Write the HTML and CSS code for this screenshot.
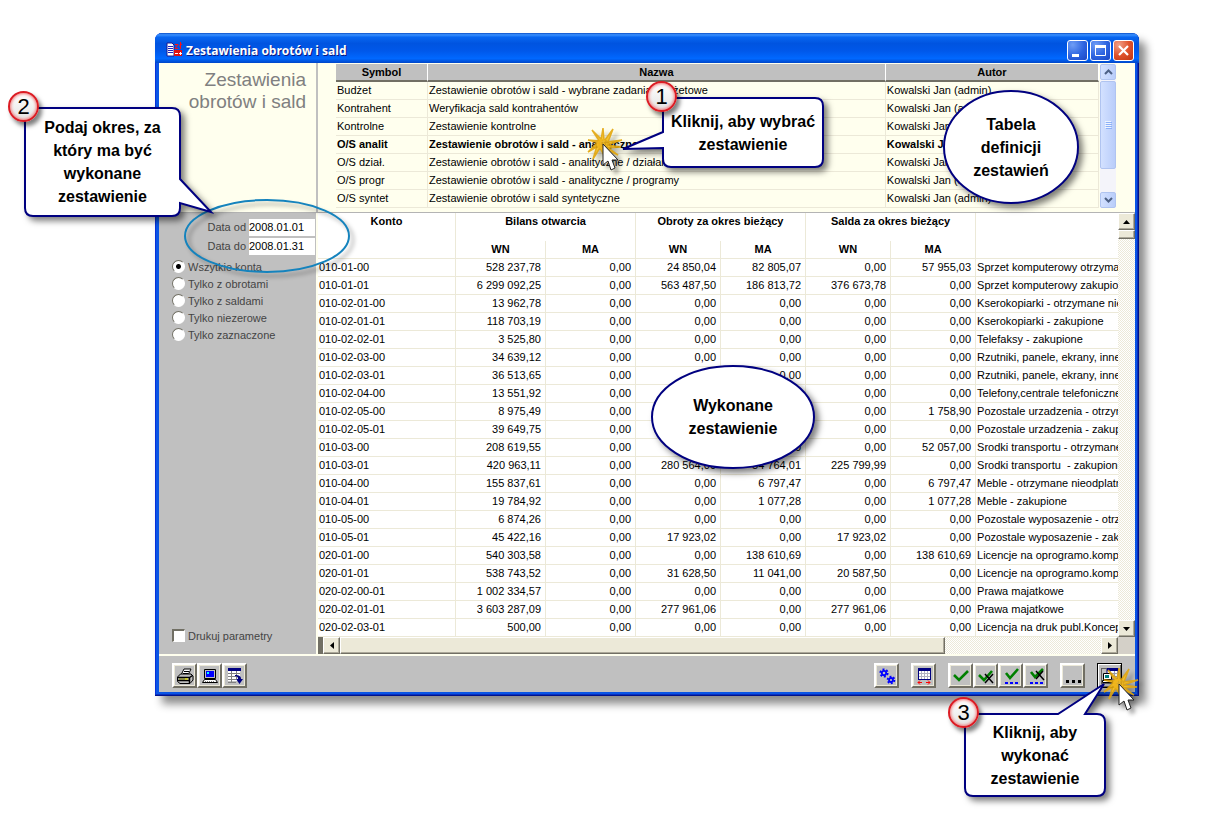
FILE: index.html
```html
<!DOCTYPE html>
<html lang="pl">

<head>
    <meta charset="UTF-8">
    <meta name="viewport" content="width=device-width, initial-scale=1.0">
    <title>Zestawienia obrotów i sald</title>
    <link rel="stylesheet" href="styles.css">
</head>

<body>
    <div class="window">
        <!-- Title Bar -->
        <header class="title-bar">
            <svg class="title-icon" width="16" height="16" viewBox="0 0 16 16">
                <path d="M1 1h5l2 2v11H1z" fill="#fff" stroke="#1a1a90" />
                <path d="M2 4.500h5M2 6.500h5M2 8.500h5M2 10.500h5" stroke="#2222c0" />
                <path d="M9 2.500h3l-3 4h3M14.500 0v7M13 4l3-2" stroke="#ff1010" fill="none" />
                <path d="M8 8h8v6H8z" fill="#e01010" />
                <path d="M9 11.500h3M13 11.500h3M14.500 10v3" stroke="#fff" />
            </svg>
            <span class="title-text">Zestawienia obrotów i sald</span>
            <button class="win-btn" aria-label="Minimalizuj">
                <svg width="19" height="19" viewBox="0 0 19 19"><path d="M4 13h7v3H4z" fill="#fff" /></svg>
            </button>
            <button class="win-btn" aria-label="Maksymalizuj">
                <svg width="19" height="19" viewBox="0 0 19 19"><path d="M4.500 4.500h10v10h-10z" fill="none" stroke="#fff" /><path d="M4 4h11v3H4z" fill="#fff" /></svg>
            </button>
            <button class="win-btn close" aria-label="Zamknij">
                <svg width="19" height="19" viewBox="0 0 19 19"><path d="M5 5l9 9M14 5l-9 9" stroke="#fff" stroke-width="2.200" /></svg>
            </button>
        </header>

        <!-- Report Definitions -->
        <section class="definitions">
            <h1 class="heading">Zestawienia<br>obrotów i sald</h1>
            <div class="def-list">
                <table class="def-table">
                    <colgroup><col class="col-symbol"><col class="col-name"><col class="col-author"></colgroup>
                    <thead>
                        <tr><th>Symbol</th><th>Nazwa</th><th>Autor</th></tr>
                    </thead>
                    <tbody>
                        <tr><td>Budżet</td><td>Zestawienie obrotów i sald - wybrane zadania budżetowe</td><td>Kowalski Jan (admin)</td></tr>
                        <tr><td>Kontrahent</td><td>Weryfikacja sald kontrahentów</td><td>Kowalski Jan (admin)</td></tr>
                        <tr><td>Kontrolne</td><td>Zestawienie kontrolne</td><td>Kowalski Jan (admin)</td></tr>
                        <tr class="selected"><td>O/S analit</td><td>Zestawienie obrotów i sald - analityczne</td><td>Kowalski Jan (admin)</td></tr>
                        <tr><td>O/S dział.</td><td>Zestawienie obrotów i sald - analityczne / działania</td><td>Kowalski Jan (admin)</td></tr>
                        <tr><td>O/S progr</td><td>Zestawienie obrotów i sald - analityczne / programy</td><td>Kowalski Jan (admin)</td></tr>
                        <tr><td>O/S syntet</td><td>Zestawienie obrotów i sald syntetyczne</td><td>Kowalski Jan (admin)</td></tr>
                    </tbody>
                </table>
                <div class="xp-scroll">
                    <button class="xp-part" aria-label="W górę"><svg width="9" height="6" viewBox="0 0 9 6"><path d="M1 5l3.500-3.500L8 5" fill="none" stroke="#4d6185" stroke-width="2" /></svg></button>
                    <div class="xp-part xp-thumb"><svg width="7" height="8" viewBox="0 0 7 8"><path d="M0 .5h6M0 2.500h6M0 4.500h6M0 6.500h6" stroke="#eef4fe" /><path d="M1 1.500h6M1 3.500h6M1 5.500h6M1 7.500h6" stroke="#8cb0f8" /></svg></div>
                    <button class="xp-part xp-down" aria-label="W dół"><svg width="9" height="6" viewBox="0 0 9 6"><path d="M1 1l3.500 3.500L8 1" fill="none" stroke="#4d6185" stroke-width="2" /></svg></button>
                </div>
            </div>
        </section>

        <!-- Parameters and Report -->
        <section class="report">
            <form class="params">
                <div class="dates">
                    <label for="date-from">Data od</label>
                    <input class="date" type="text" id="date-from" value="2008.01.01">
                    <label for="date-to">Data do</label>
                    <input class="date" type="text" id="date-to" value="2008.01.31">
                </div>
                <label class="option"><input type="radio" name="scope" checked>Wszytkie konta</label>
                <label class="option"><input type="radio" name="scope">Tylko z obrotami</label>
                <label class="option"><input type="radio" name="scope">Tylko z saldami</label>
                <label class="option"><input type="radio" name="scope">Tylko niezerowe</label>
                <label class="option"><input type="radio" name="scope">Tylko zaznaczone</label>
                <label class="option print-params"><input type="checkbox">Drukuj parametry</label>
            </form>

            <div class="grid">
                <div class="grid-body">
                    <div class="accounts-wrap">
                        <table class="accounts">
                            <colgroup>
                                <col class="col-account">
                                <col class="col-opening"><col class="col-opening">
                                <col class="col-amount"><col class="col-amount"><col class="col-amount"><col class="col-amount">
                                <col>
                            </colgroup>
                            <thead>
                                <tr><th rowspan="2">Konto</th><th colspan="2" class="group">Bilans otwarcia</th><th colspan="2" class="group">Obroty za okres bieżący</th><th colspan="2" class="group">Salda za okres bieżący</th><th rowspan="2"></th></tr>
                                <tr class="sub"><th>WN</th><th>MA</th><th>WN</th><th>MA</th><th>WN</th><th>MA</th></tr>
                            </thead>
                            <tbody>
                                <tr><td>010-01-00</td><td>528 237,78</td><td>0,00</td><td>24 850,04</td><td>82 805,07</td><td>0,00</td><td>57 955,03</td><td>Sprzet komputerowy otrzymany</td></tr>
                                <tr><td>010-01-01</td><td>6 299 092,25</td><td>0,00</td><td>563 487,50</td><td>186 813,72</td><td>376 673,78</td><td>0,00</td><td>Sprzet komputerowy zakupiony</td></tr>
                                <tr><td>010-02-01-00</td><td>13 962,78</td><td>0,00</td><td>0,00</td><td>0,00</td><td>0,00</td><td>0,00</td><td>Kserokopiarki - otrzymane nieodplatnie</td></tr>
                                <tr><td>010-02-01-01</td><td>118 703,19</td><td>0,00</td><td>0,00</td><td>0,00</td><td>0,00</td><td>0,00</td><td>Kserokopiarki - zakupione</td></tr>
                                <tr><td>010-02-02-01</td><td>3 525,80</td><td>0,00</td><td>0,00</td><td>0,00</td><td>0,00</td><td>0,00</td><td>Telefaksy - zakupione</td></tr>
                                <tr><td>010-02-03-00</td><td>34 639,12</td><td>0,00</td><td>0,00</td><td>0,00</td><td>0,00</td><td>0,00</td><td>Rzutniki, panele, ekrany, inne</td></tr>
                                <tr><td>010-02-03-01</td><td>36 513,65</td><td>0,00</td><td>0,00</td><td>0,00</td><td>0,00</td><td>0,00</td><td>Rzutniki, panele, ekrany, inne</td></tr>
                                <tr><td>010-02-04-00</td><td>13 551,92</td><td>0,00</td><td>0,00</td><td>0,00</td><td>0,00</td><td>0,00</td><td>Telefony,centrale telefoniczne</td></tr>
                                <tr><td>010-02-05-00</td><td>8 975,49</td><td>0,00</td><td>0,00</td><td>1 758,90</td><td>0,00</td><td>1 758,90</td><td>Pozostale urzadzenia - otrzymane</td></tr>
                                <tr><td>010-02-05-01</td><td>39 649,75</td><td>0,00</td><td>0,00</td><td>0,00</td><td>0,00</td><td>0,00</td><td>Pozostale urzadzenia - zakupione</td></tr>
                                <tr><td>010-03-00</td><td>208 619,55</td><td>0,00</td><td>0,00</td><td>52 057,00</td><td>0,00</td><td>52 057,00</td><td>Srodki transportu - otrzymane</td></tr>
                                <tr><td>010-03-01</td><td>420 963,11</td><td>0,00</td><td>280 564,00</td><td>54 764,01</td><td>225 799,99</td><td>0,00</td><td>Srodki transportu&nbsp; - zakupione</td></tr>
                                <tr><td>010-04-00</td><td>155 837,61</td><td>0,00</td><td>0,00</td><td>6 797,47</td><td>0,00</td><td>6 797,47</td><td>Meble - otrzymane nieodplatnie</td></tr>
                                <tr><td>010-04-01</td><td>19 784,92</td><td>0,00</td><td>0,00</td><td>1 077,28</td><td>0,00</td><td>1 077,28</td><td>Meble - zakupione</td></tr>
                                <tr><td>010-05-00</td><td>6 874,26</td><td>0,00</td><td>0,00</td><td>0,00</td><td>0,00</td><td>0,00</td><td>Pozostale wyposazenie - otrzymane</td></tr>
                                <tr><td>010-05-01</td><td>45 422,16</td><td>0,00</td><td>17 923,02</td><td>0,00</td><td>17 923,02</td><td>0,00</td><td>Pozostale wyposazenie - zakupione</td></tr>
                                <tr><td>020-01-00</td><td>540 303,58</td><td>0,00</td><td>0,00</td><td>138 610,69</td><td>0,00</td><td>138 610,69</td><td>Licencje na oprogramo.komputerowe</td></tr>
                                <tr><td>020-01-01</td><td>538 743,52</td><td>0,00</td><td>31 628,50</td><td>11 041,00</td><td>20 587,50</td><td>0,00</td><td>Licencje na oprogramo.komputerowe</td></tr>
                                <tr><td>020-02-00-01</td><td>1 002 334,57</td><td>0,00</td><td>0,00</td><td>0,00</td><td>0,00</td><td>0,00</td><td>Prawa majatkowe</td></tr>
                                <tr><td>020-02-01-01</td><td>3 603 287,09</td><td>0,00</td><td>277 961,06</td><td>0,00</td><td>277 961,06</td><td>0,00</td><td>Prawa majatkowe</td></tr>
                                <tr><td>020-02-03-01</td><td>500,00</td><td>0,00</td><td>0,00</td><td>0,00</td><td>0,00</td><td>0,00</td><td>Licencja na druk publ.Koncepcja</td></tr>
                            </tbody>
                        </table>
                    </div>
                    <div class="scroll vertical">
                        <button class="scroll-btn" aria-label="W górę"><svg width="7" height="4" viewBox="0 0 7 4"><path d="M0 4h7L3.500 0z" /></svg></button>
                        <div class="scroll-thumb"></div>
                        <button class="scroll-btn scroll-end" aria-label="W dół"><svg width="7" height="4" viewBox="0 0 7 4"><path d="M0 0h7L3.500 4z" /></svg></button>
                    </div>
                </div>
                <div class="scroll horizontal">
                    <div class="splitter"></div>
                    <button class="scroll-btn" aria-label="W lewo"><svg width="4" height="7" viewBox="0 0 4 7"><path d="M4 0v7L0 3.500z" /></svg></button>
                    <div class="scroll-thumb"></div>
                    <button class="scroll-btn scroll-end" aria-label="W prawo"><svg width="4" height="7" viewBox="0 0 4 7"><path d="M0 0v7l4-3.500z" /></svg></button>
                    <div class="corner"></div>
                </div>
            </div>
        </section>

        <!-- Toolbar -->
        <footer class="toolbar">
            <div class="tool-group">
                <button class="tool" aria-label="Drukuj">
                    <svg width="18" height="18" viewBox="0 0 18 18">
                        <path d="M5 8l3-6h7l-3 6z" fill="#fff" stroke="#000" />
                        <path d="M8 4.500h5M7 6.500h5" stroke="#000" />
                        <path d="M1.500 10l3-3h10.500l2 2v4l-3 3.500h-10l-2.500-2z" fill="#c0c0c0" stroke="#000" />
                        <path d="M2 10.500h11.500l3-2M2 13.500h12M13.500 10v6" stroke="#000" stroke-width="1.500" fill="none" />
                        <path d="M3 12h8" stroke="#808000" /><path d="M9 12h3" stroke="#ff0" />
                    </svg>
                </button>
                <button class="tool" aria-label="Ekran">
                    <svg width="18" height="18" viewBox="0 0 18 18">
                        <path d="M3.500 2.500h11v9h-11z" fill="#c0c0c0" stroke="#000" />
                        <path d="M5 4h8v6H5z" fill="#00f" /><path d="M6 5h2v2H6z" fill="#0ff" />
                        <path d="M3.500 12.500h11l2 3h-15z" fill="#fff" stroke="#000" />
                        <path d="M4 14.500h10" stroke="#808080" stroke-dasharray="1 1" />
                    </svg>
                </button>
                <button class="tool" aria-label="Eksport">
                    <svg width="18" height="18" viewBox="0 0 18 18">
                        <path d="M2 2h12v12H2z" fill="#fff" /><path d="M2 1h13v3H2z" fill="#000080" />
                        <path d="M2 6.500h12M2 9.500h10M2 12.500h8M2 15.500h8M5.500 4v12M10.500 4v8" stroke="#808080" />
                        <path d="M9 8c4 0 6 1 6 4h2l-3.500 5L10 12h2c0-2-1-3-3-3z" fill="#000080" />
                    </svg>
                </button>
            </div>
            <div class="tool-group push">
                <button class="tool" aria-label="Ustawienia">
                    <svg width="18" height="18" viewBox="0 0 18 18" fill="none" stroke="#00f">
                        <circle cx="6" cy="6" r="2.200" stroke-width="1.800" /><circle cx="6" cy="6" r="3.700" stroke-width="1.800" stroke-dasharray="2 1.870" />
                        <circle cx="13" cy="13" r="2" stroke-width="1.800" /><circle cx="13" cy="13" r="3.400" stroke-width="1.800" stroke-dasharray="1.800 1.760" />
                    </svg>
                </button>
            </div>
            <div class="tool-group">
                <button class="tool" aria-label="Szerokość kolumn">
                    <svg width="18" height="18" viewBox="0 0 18 18">
                        <path d="M3 1h13v12H3z" fill="#fff" /><path d="M3 1h13v3H3z" fill="#000080" />
                        <path d="M3 6.500h13M3 9.500h13M6.500 4v8M9.500 4v8M12.500 4v8" stroke="#b0b0c0" />
                        <path d="M3.500 1v12M15.500 1v12M3 12.500h13" stroke="#000080" fill="none" />
                        <path d="M3 15.500h4M5 13.500l-2 2 2 2M11 15.500h4M13 13.500l2 2-2 2" stroke="#f00" fill="none" />
                    </svg>
                </button>
            </div>
            <div class="tool-group">
                <button class="tool" aria-label="Zaznacz">
                    <svg width="18" height="18" viewBox="0 0 18 18"><path d="M2 8l5 5 9-9" fill="none" stroke="#008000" stroke-width="2.600" /></svg>
                </button>
                <button class="tool" aria-label="Odznacz">
                    <svg width="18" height="18" viewBox="0 0 18 18"><path d="M2 8l5 5 8-9" fill="none" stroke="#008000" stroke-width="2.600" /><path d="M8 7l8 9M16 7l-8 9" stroke="#000" stroke-width="1.500" /></svg>
                </button>
                <button class="tool" aria-label="Zaznacz wszystkie">
                    <svg width="18" height="18" viewBox="0 0 18 18"><path d="M4 6l4 5 8-9" fill="none" stroke="#008000" stroke-width="2.600" /><path d="M3 16h14" stroke="#00f" stroke-width="2" stroke-dasharray="3 2" /></svg>
                </button>
                <button class="tool" aria-label="Odznacz wszystkie">
                    <svg width="18" height="18" viewBox="0 0 18 18"><path d="M4 5l4 5 8-8" fill="none" stroke="#008000" stroke-width="2.600" /><path d="M9 4l8 9M16 4l-7 8" stroke="#000" stroke-width="1.500" /><path d="M3 16h14" stroke="#00f" stroke-width="2" stroke-dasharray="3 2" /></svg>
                </button>
            </div>
            <div class="tool-group">
                <button class="tool" aria-label="Więcej">
                    <svg width="18" height="18" viewBox="0 0 18 18"><path d="M2 13h3v3H2zM8 13h3v3H8zM14 13h3v3h-3z" /></svg>
                </button>
            </div>
            <div class="tool-group">
                <button class="tool current" aria-label="Wykonaj zestawienie">
                    <svg width="18" height="18" viewBox="0 0 18 18">
                        <path d="M.5 1.500h17v15H.5z" fill="none" stroke="#000" stroke-dasharray="1 1" />
                        <path d="M6 2h11v10H6z" fill="#fff" stroke="#000080" /><path d="M6 1h11v3H6z" fill="#000080" />
                        <path d="M6 6.500h11M6 9.500h11M9.500 4v8M13.500 4v8" stroke="#a0a0b0" />
                        <path d="M2.500 6.500h8v6h-8z" fill="#fff" stroke="#000" /><path d="M4 8h4v3H4z" fill="#008080" />
                        <path d="M1.500 13.500h10v2h-10z" fill="#fff" stroke="#000" />
                    </svg>
                </button>
            </div>
        </footer>

        <!-- Annotations -->
        <svg class="mark dates-mark" width="166" height="74" viewBox="0 0 166 74">
            <ellipse cx="83" cy="37" rx="82" ry="36" fill="none" stroke="#1583bd" stroke-width="2" />
        </svg>

        <div class="callout callout-choose">
            <svg class="shape" width="162" height="71" viewBox="0 0 162 71"><path d="M8 1h145q8 0 8 8v53q0 8-8 8H9q-8 0-8-8V51L-39 52 1 35V9q0-8 8-8z" /></svg>
            <span class="badge">1</span>
            <p>Kliknij, aby wybrać<br>zestawienie</p>
        </div>
        <div class="callout callout-period">
            <svg class="shape" width="157" height="110" viewBox="0 0 157 110"><path d="M9 1h139q8 0 8 8v63l31 33-31-9v5q0 8-8 8H9q-8 0-8-8V9q0-8 8-8z" /></svg>
            <span class="badge">2</span>
            <p>Podaj okres, za<br>który ma być<br>wykonane<br>zestawienie</p>
        </div>
        <div class="callout callout-run">
            <svg class="shape" width="142" height="84" viewBox="0 0 142 84"><path d="M9 1h85l46-30-19 30h12q8 0 8 8v66q0 8-8 8H9q-8 0-8-8V9q0-8 8-8z" /></svg>
            <span class="badge">3</span>
            <p>Kliknij, aby<br>wykonać<br>zestawienie</p>
        </div>
        <div class="callout callout-definitions">
            <svg class="shape" width="138" height="114" viewBox="0 0 138 114"><ellipse cx="69" cy="57" rx="67" ry="56" /></svg>
            <p>Tabela<br>definicji<br>zestawień</p>
        </div>
        <div class="callout callout-result">
            <svg class="shape" width="164" height="104" viewBox="0 0 164 104"><ellipse cx="82" cy="52" rx="81" ry="51" /></svg>
            <p>Wykonane<br>zestawienie</p>
        </div>

        <svg class="mark burst-row" width="40" height="50" viewBox="0 0 40 50">
            <use href="#burst-shape" />
        </svg>
        <svg class="mark burst-run" width="40" height="50" viewBox="0 0 40 50">
            <g id="burst-shape">
                <path d="M18 12L8 2l8 12zM20 12L19 0l-2 12zM21 12l8-11-5 13zM23 14l15-2-15 5zM23 17l14 2-14 1zM22 18l12 9-14-7zM19 19l2 10-5-9zM17 18L9 31l4-13zM16 17L4 24l9-9zM16 15L4 12l12 1z" fill="#fbc421" stroke="#e3a60c" stroke-width="1.500" opacity="0.9" />
                <circle cx="18" cy="16" r="5" fill="#f3b81c" opacity="0.85" />
                <path d="M19 16v21l5-4 3 9 4-2-3-8h6z" fill="#fff" stroke="#222" stroke-linejoin="round" />
            </g>
        </svg>
    </div>
</body>

</html>
```

FILE: styles.css
```css
/* General Styles */
* {
    box-sizing: border-box;
}

body {
    min-height: 100vh;
    margin: 0;
    padding: 33px 89px 0 155px;
    background-color: #fff;
    font-family: "Liberation Sans", Arial, sans-serif;
    font-size: 11px;
    color: #000;
}

button {
    display: flex;
    align-items: center;
    justify-content: center;
    margin: 0;
    padding: 0;
    border: none;
}

table {
    width: 100%;
    table-layout: fixed;
    border-spacing: 0;
}

th,
td {
    height: 18px;
    padding: 0 1px;
    line-height: 17px;
    border-right: 1px solid #ece9d8;
    border-bottom: 1px solid #ece9d8;
    text-align: left;
    white-space: nowrap;
    overflow: hidden;
}

th {
    text-align: center;
}

/* Window */
.window {
    position: relative;
    padding: 0 4px 4px;
    background-color: #0a55e5;
    border-radius: 7px 7px 0 0;
    box-shadow: inset -1px -1px #00138c, inset -2px -2px #0730c0, inset 1px 0 #0831d9, 7px 8px 9px rgba(0, 0, 0, 0.45);
}

.title-bar {
    display: flex;
    align-items: center;
    gap: 2px;
    height: 30px;
    margin: 0 -4px;
    padding: 4px 5px 0 11px;
    border-radius: 7px 7px 0 0;
    background: linear-gradient(#0a4fc8 0, #3a90ff 6%, #0866f0 14%, #0054e0 35%, #0058ea 60%, #0068ff 85%, #0046c8 100%);
}

.title-text {
    flex: 1;
    padding-left: 2px;
    font-family: "Open Sans", sans-serif;
    font-size: 12px;
    font-weight: bold;
    color: #fff;
    text-shadow: 1px 1px #0a1883;
}

.win-btn {
    width: 21px;
    height: 21px;
    border: 1px solid #fff;
    border-radius: 3px;
    background: radial-gradient(circle at 25% 20%, #6f9df5, #2c63e0 55%, #1c47c4);
}

.win-btn.close {
    background: radial-gradient(circle at 25% 20%, #f0a088, #e0532c 50%, #c03410);
}

/* Report Definitions */
.definitions {
    display: flex;
    background-color: #ffffee;
    border-bottom: 1px solid #b4b4b4;
}

.heading {
    width: 159px;
    margin: 0;
    padding: 6px 10px 0 0;
    border-right: 2px solid #c0c0c0;
    font-size: 19px;
    font-weight: normal;
    line-height: 22px;
    text-align: right;
    color: #808080;
}

.def-list {
    flex: 1;
    display: flex;
    gap: 1px;
    min-width: 0;
    padding: 1px 19px 4px 18px;
}

.col-symbol {
    width: 92px;
}

.col-name {
    width: 60%;
}

.def-table th {
    background-color: #c0c0c0;
    border-right-color: #fff;
    border-bottom: 2px solid #716f64;
    line-height: 14px;
}

.selected {
    font-weight: bold;
}

.xp-scroll {
    display: flex;
    flex-direction: column;
    width: 16px;
    gap: 1px;
    background-color: #f4f4fa;
}

.xp-part {
    width: 16px;
    height: 16px;
    border: 1px solid #b0c4f0;
    border-radius: 2px;
    background: linear-gradient(90deg, #d3e1ff, #b9cdfa);
}

.xp-thumb {
    display: flex;
    align-items: center;
    justify-content: center;
    height: 88px;
}

.xp-down,
.scroll-end {
    margin-top: auto;
}

/* Parameters */
.report {
    display: flex;
    border-bottom: 2px solid #ffffee;
}

.params {
    display: flex;
    flex-direction: column;
    width: 159px;
    padding: 6px 1px 10px 13px;
    background-color: #c0c0c0;
    border-right: 2px solid #ffffee;
    color: #444;
}

.dates {
    display: grid;
    grid-template-columns: 1fr 66px;
    gap: 2px 3px;
    margin-bottom: 3px;
    line-height: 17px;
    text-align: right;
}

.date {
    width: 100%;
    height: 17px;
    padding: 0;
    border: none;
    background-color: #fff;
    font: inherit;
    color: #000;
}

.option {
    display: flex;
    align-items: center;
    gap: 3px;
    height: 17px;
}

.option input {
    appearance: none;
    width: 13px;
    height: 13px;
    margin: 0;
    border: 1px solid;
    border-color: #716f64 #fff #fff #716f64;
    background-color: #fff;
}

.option input[type="radio"] {
    border-radius: 50%;
}

.option input[type="radio"]:checked {
    background-image: radial-gradient(circle, #000 2px, transparent 3px);
}

.print-params {
    margin-top: auto;
}

.print-params input {
    border-width: 2px 1px 1px 2px;
}

/* Report Grid */
.grid {
    flex: 1;
    min-width: 0;
    background-color: #fff;
}

.grid-body {
    display: flex;
}

.accounts-wrap {
    flex: 1;
    min-width: 0;
    overflow: hidden;
}

.col-account {
    width: 138px;
}

.col-opening {
    width: 90px;
}

.col-amount {
    width: 85px;
}

.accounts th {
    height: 28px;
    vertical-align: top;
}

.accounts .group {
    border-bottom: none;
}

.accounts .sub th {
    height: 18px;
}

.accounts td {
    padding-right: 4px;
    text-align: right;
}

.accounts td:first-child,
.accounts td:last-child {
    padding-right: 0;
    text-align: left;
}

.accounts tr > :last-child {
    border-right: none;
}

.accounts .sub > :last-child {
    border-right: 1px solid #ece9d8;
}

/* Classic Scrollbars */
.scroll {
    display: flex;
    background: repeating-conic-gradient(#ece9d8 0 25%, #fff 0 50%) 0 0 / 2px 2px;
}

.vertical {
    flex-direction: column;
    width: 17px;
}

.horizontal {
    height: 17px;
}

.scroll-btn,
.scroll-thumb {
    flex-shrink: 0;
    width: 17px;
    height: 17px;
    background-color: #ece9d8;
    border: 1px solid;
    border-color: #fff #716f64 #716f64 #fff;
    box-shadow: inset -1px -1px #aca899;
}

.vertical .scroll-thumb {
    height: 9px;
}

.horizontal .scroll-thumb {
    width: 74%;
}

.horizontal .scroll-end {
    margin-left: auto;
}

.splitter {
    width: 5px;
    background-color: #716f64;
}

.corner {
    width: 17px;
    background-color: #d4d0c8;
}

/* Toolbar */
.toolbar {
    display: flex;
    gap: 12px;
    padding: 7px 13px 4px;
    background-color: #c0c0c0;
}

.tool-group {
    display: flex;
}

.push {
    margin-left: auto;
}

.tool {
    width: 25px;
    height: 25px;
    background-color: #c0c0c0;
    border: 2px solid;
    border-color: #fff #716f64 #716f64 #fff;
    box-shadow: inset 1px 1px #ece9d8, inset -1px -1px #ece9d8;
}

.tool.current {
    border: 1px solid #000;
    box-shadow: inset 1px 1px #fff, inset -1px -1px #716f64;
}

/* Annotations */
.mark,
.callout {
    position: absolute;
}

.mark {
    overflow: visible;
    pointer-events: none;
    filter: drop-shadow(4px 4px 2px rgba(0, 0, 0, 0.35));
}

.dates-mark {
    left: 29px;
    top: 166px;
}

.burst-row {
    left: 429px;
    top: 95px;
}

.burst-run {
    right: -1px;
    top: 635px;
}

.callout {
    display: flex;
    align-items: center;
    justify-content: center;
}

.callout p {
    position: relative;
    margin: 0;
    font-size: 16px;
    font-weight: bold;
    line-height: 23px;
    text-align: center;
    white-space: nowrap;
}

.shape {
    position: absolute;
    left: 0;
    top: 0;
    overflow: visible;
    fill: #fff;
    stroke: #000080;
    stroke-width: 2px;
    filter: drop-shadow(4px 4px 3px rgba(0, 0, 0, 0.5));
}

.badge {
    position: absolute;
    left: -16px;
    top: -16px;
    width: 31px;
    height: 31px;
    border: 2px solid #dc1c24;
    border-radius: 50%;
    background: linear-gradient(#fff, #e4e4e4);
    box-shadow: inset 0 0 3px 1px #f08080, 3px 4px 4px rgba(0, 0, 0, 0.5);
    font-size: 22px;
    line-height: 27px;
    text-align: center;
}

.callout-choose {
    left: 507px;
    top: 64px;
    width: 162px;
    height: 71px;
}

.callout-period {
    left: -131px;
    top: 74px;
    width: 157px;
    height: 110px;
}

.callout-run {
    right: 33px;
    top: 680px;
    width: 142px;
    height: 84px;
}

.callout-definitions {
    right: 59px;
    top: 57px;
    width: 138px;
    height: 114px;
}

.callout-result {
    left: 496px;
    top: 332px;
    width: 164px;
    height: 104px;
}
```
